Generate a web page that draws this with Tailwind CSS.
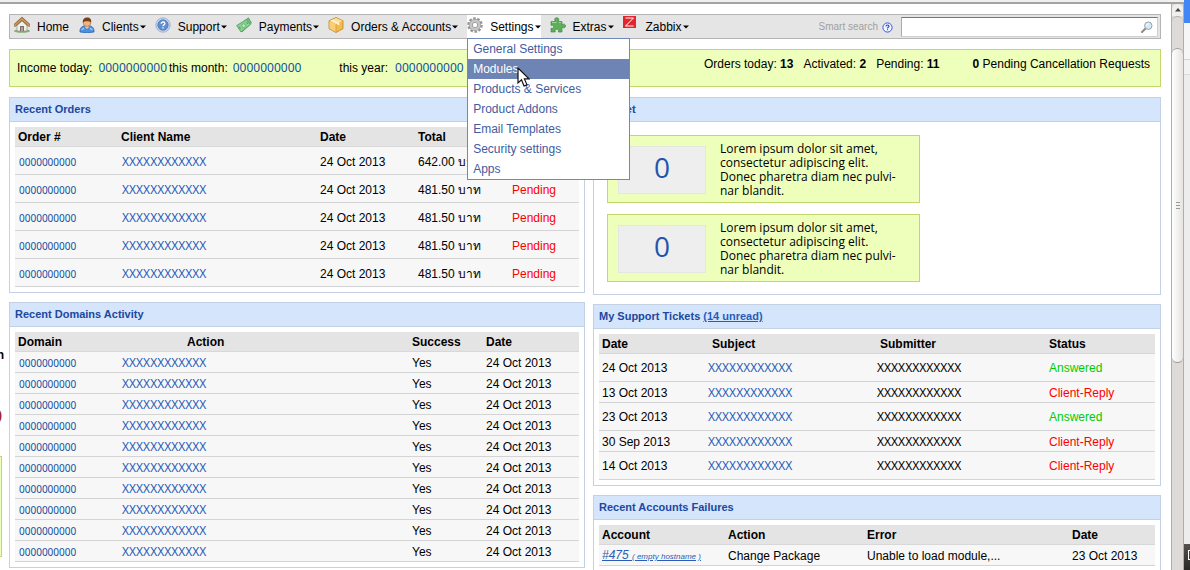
<!DOCTYPE html>
<html lang="en">
<head>
    <meta charset="UTF-8">
    <meta name="viewport" content="width=device-width, initial-scale=1.0">
    <title>Admin Dashboard</title>
    <script src="https://cdn.jsdelivr.net/npm/@tailwindcss/browser@4"></script>
</head>
<body class="bg-white text-black text-[12px] leading-4 font-['Liberation_Sans',Arial,sans-serif]">
<div class="flex h-screen overflow-hidden">

    <div class="flex flex-1 min-w-0 flex-col">
        <div class="h-1 shrink-0 bg-[#f0f0f0] border-b-2 border-[#a3a3a3]"></div>

        <div class="flex flex-1 min-h-0">
            <!-- Edge of the collapsed sidebar -->
            <aside class="w-[9px] shrink-0 overflow-hidden">
                <div class="mt-[343px] w-1 flex justify-end font-bold">n</div>
                <div class="mt-11 w-0.5 flex justify-end font-bold text-[#a02020]">)</div>
                <div class="mt-[33px] w-0.5 h-[101px] bg-[#eeffbb] border border-l-0 border-[#c3d86c]"></div>
            </aside>

            <main class="flex-1 min-w-0 pt-2.5">
                <!-- Toolbar -->
                <header class="flex items-stretch h-[25px] border border-[#b4b4b4] bg-[#e5e5e5] pl-1">
                    <nav class="flex gap-[9px] whitespace-nowrap">
                        <a href="#" class="flex items-center gap-[7px] pr-px">
                            <svg class="size-4 -mt-1" viewBox="0 0 16 16">
                                <ellipse cx="8" cy="14" rx="8" ry="1.8" fill="#7fae74"/>
                                <path d="M3 8.500 8 4l5 4.500V14H3z" fill="#f1efe9" stroke="#9a9488" stroke-width=".7"/>
                                <path d="M1 8.200 8 1.800l7 6.400" fill="none" stroke="#8a5a2b" stroke-width="3" stroke-linecap="round"/>
                                <path d="M1 8.200 8 1.800l7 6.400" fill="none" stroke="#c99a62" stroke-width="1.700" stroke-linecap="round"/>
                                <path d="M6 9h4v5H6z" fill="#77716b"/>
                                <path d="M7 10h2v4H7z" fill="#a9a39c"/>
                            </svg>
                            Home
                        </a>
                        <a href="#" class="flex items-center">
                            <svg class="size-4 mr-[7px] -mt-1" viewBox="0 0 16 16">
                                <path d="M1 15c-.4-4 2-6.500 7-6.500s7.400 2.500 7 6.500q-7 1.500-14 0z" fill="#4e8edb" stroke="#2c65b4" stroke-width=".8"/>
                                <path d="M2.500 13 5 11M13.500 13 11 11" stroke="#a9cdf5" stroke-width="1.200"/>
                                <circle cx="8" cy="5.500" r="3.900" fill="#f0b47c" stroke="#a7663a" stroke-width=".6"/>
                                <path d="M3.900 5.500C3.500 2 5.500.5 8.200.5s4.500 1.700 3.900 5C10.500 4 6 3.500 3.900 5.500z" fill="#7a3f18"/>
                                <path d="M5.500 9.500 8 12l2.500-2.500" fill="#f2c193"/>
                            </svg>
                            Clients
                            <svg class="w-1.5 h-1 ml-px" viewBox="0 0 6 4"><path d="M0 .5h6L3 3.500z"/></svg>
                        </a>
                        <a href="#" class="flex items-center">
                            <svg class="size-4 mr-[7px] -mt-1" viewBox="0 0 16 16">
                                <circle cx="8" cy="8" r="7.200" fill="#c3d4ea" stroke="#93aacb" stroke-width=".8"/>
                                <circle cx="8" cy="8" r="5.200" fill="#5f8fd0" stroke="#4674b5" stroke-width=".7"/>
                                <path d="M6.200 6.700C6.200 5.500 7 5 8 5s1.900.6 1.900 1.600C9.900 7.900 8 7.900 8 9.200" fill="none" stroke="#fff" stroke-width="1.300"/>
                                <circle cx="8" cy="11" r=".8" fill="#fff"/>
                            </svg>
                            Support
                            <svg class="w-1.5 h-1 ml-px" viewBox="0 0 6 4"><path d="M0 .5h6L3 3.500z"/></svg>
                        </a>
                        <a href="#" class="flex items-center">
                            <svg class="size-4 mr-[7px] -mt-1" viewBox="0 0 16 16">
                                <path d="M3 8 12.500.8 15.500 6 6 15z" fill="#74bd7e" stroke="#4f9e5d" stroke-width=".8"/>
                                <path d="M.6 8.500 10.500 2.500 14.500 7.500 5 15z" fill="#8bd093" stroke="#4f9e5d" stroke-width=".8"/>
                                <circle cx="7.700" cy="8.700" r="1.800" fill="#c9ecc8" stroke="#5cab69" stroke-width=".8"/>
                                <path d="M3 9.500 4.500 12M10.500 5l1.500 2" stroke="#4f9e5d"/>
                            </svg>
                            Payments
                            <svg class="w-1.5 h-1 ml-px" viewBox="0 0 6 4"><path d="M0 .5h6L3 3.500z"/></svg>
                        </a>
                        <a href="#" class="flex items-center">
                            <svg class="size-4 mr-[7px] -mt-1" viewBox="0 0 16 16">
                                <path d="M8 .5 15 3.800v7.900L8 15.500l-7-3.800V3.800z" fill="#f2bb4c" stroke="#bd8426" stroke-width=".8" stroke-linejoin="round"/>
                                <path d="M8 1 14.500 4 8 7.300 1.500 4z" fill="#fbdf9a"/>
                                <path d="M1.500 4.500 8 7.600V15l-6.500-3.500z" fill="#f8ce76"/>
                                <path d="M4.500 2.700 11.300 5.800v2.700l-2-1V6.700L2.800 3.500" fill="#fff3cf"/>
                                <path d="M8 7.500V15" stroke="#d3952f" stroke-width=".7"/>
                            </svg>
                            Orders &amp; Accounts
                            <svg class="w-1.5 h-1 ml-px" viewBox="0 0 6 4"><path d="M0 .5h6L3 3.500z"/></svg>
                        </a>
                        <div class="relative flex bg-white">
                            <a href="#" class="flex items-center">
                                <svg class="size-4 mr-[7px] -mt-1" viewBox="0 0 16 16">
                                    <circle cx="8" cy="8" r="6.600" fill="none" stroke="#969696" stroke-width="2.400" stroke-dasharray="2.600 1.547"/>
                                    <circle cx="8" cy="8" r="4.100" fill="none" stroke="#8f8f8f" stroke-width="4"/>
                                    <circle cx="8" cy="8" r="4.200" fill="none" stroke="#c6c6c6" stroke-width="2.800"/>
                                    <circle cx="8" cy="8" r="2" fill="#fff"/>
                                </svg>
                                Settings
                                <svg class="w-1.5 h-1 ml-px" viewBox="0 0 6 4"><path d="M0 .5h6L3 3.500z"/></svg>
                            </a>
                            <!-- Settings submenu -->
                            <div class="absolute left-0 top-full z-10 w-[163px] border border-[#7089bc] bg-white text-[#3f5c9e]">
                                <a href="#" class="block px-[5px] py-0.5">General Settings</a>
                                <a href="#" class="block px-[5px] py-0.5 bg-[#6d84b4] text-white">Modules</a>
                                <a href="#" class="block px-[5px] py-0.5">Products &amp; Services</a>
                                <a href="#" class="block px-[5px] py-0.5">Product Addons</a>
                                <a href="#" class="block px-[5px] py-0.5">Email Templates</a>
                                <a href="#" class="block px-[5px] py-0.5">Security settings</a>
                                <a href="#" class="block px-[5px] py-0.5">Apps</a>
                                <svg class="absolute left-[49px] top-7 w-[13px] h-5" viewBox="0 0 13 20">
                                    <path d="M1 1v15l3.500-3.200L7 19l3-1.200-2.600-5.900H12z" fill="#fff" stroke="#111" stroke-width="1.200"/>
                                </svg>
                            </div>
                        </div>
                        <a href="#" class="flex items-center">
                            <svg class="size-4 mr-[7px] -mt-1" viewBox="0 0 16 16">
                                <path d="M1 4.500h4.300C4 2 5 .7 6.700.7S9.500 2 8.300 4.500H12v3.200c2-1.200 3.500-.4 3.500 1.300s-1.500 2.500-3.500 1.300V15H8.300c.8-2-.2-2.800-1.500-2.800S4.600 13 5.300 15H1v-3.800c1.800.5 2.600-.3 2.600-1.500S2.800 7.800 1 8.400z" fill="#5fae5c" stroke="#3d8d42" stroke-width=".7"/>
                                <path d="M2 5.500h4.500M9 5.500h2" stroke="#a2d89c"/>
                            </svg>
                            Extras
                            <svg class="w-1.5 h-1 ml-px" viewBox="0 0 6 4"><path d="M0 .5h6L3 3.500z"/></svg>
                        </a>
                        <a href="#" class="flex items-center">
                            <svg class="w-[13px] h-3 mr-2.5 self-start mt-px" viewBox="0 0 13 12">
                                <path d="M0 0h13v12H0z" fill="#e3262b"/>
                                <path d="M2.500 2h8l-8 8h8" fill="none" stroke="#fff" stroke-width="1"/>
                            </svg>
                            Zabbix
                            <svg class="w-1.5 h-1 ml-px" viewBox="0 0 6 4"><path d="M0 .5h6L3 3.500z"/></svg>
                        </a>
                    </nav>
                    <form class="ml-auto flex items-center" onsubmit="return false">
                        <label for="search" class="text-[10px] text-[#a0a0a0]">Smart search</label>
                        <svg class="size-[11px] ml-1 mr-2 mt-0.5" viewBox="0 0 11 11">
                            <circle cx="5.500" cy="5.500" r="4.600" fill="#f4f6ff" stroke="#3a57d6"/>
                            <path d="M4 4.500C4 3.400 4.700 3 5.500 3s1.500.5 1.500 1.300c0 1-1.500 1-1.500 2.100" fill="none" stroke="#2340c4" stroke-width="1.100"/>
                            <path d="M5 7.300h1.100v1H5z" fill="#2340c4"/>
                        </svg>
                        <div class="flex items-center h-5 w-[257px] mr-0.5 bg-white border border-[#cfcfcf] border-t-[#777] border-l-[#aaa]">
                            <input id="search" type="text" class="flex-1 min-w-0 h-full px-1 bg-transparent outline-none">
                            <button type="submit" aria-label="Search" class="mr-1">
                                <svg class="size-3" viewBox="0 0 12 12">
                                    <path d="m1 11 3.500-3.500" stroke="#8b8b8b" stroke-width="2" stroke-linecap="round"/>
                                    <circle cx="7.300" cy="4.700" r="3.700" fill="#d3ebf8" stroke="#9a9fa5"/>
                                    <path d="M5.500 4.500q.3-1.700 2-1.900" fill="none" stroke="#fff"/>
                                </svg>
                            </button>
                        </div>
                    </form>
                </header>

                <!-- Summary bar -->
                <section class="mt-2.5 flex h-[38px] justify-between border border-[#c3d86c] bg-[#eeffbb] pl-[7px] pr-2.5 whitespace-nowrap">
                    <div class="flex items-center">
                        Income today:
                        <a href="#" class="ml-1.5 mr-0.5 font-['Noto_Sans',sans-serif] text-[#1450a0]">0000000000</a>
                        this month:
                        <a href="#" class="ml-[5px] mr-[38px] font-['Noto_Sans',sans-serif] text-[#1450a0]">0000000000</a>
                        this year:
                        <a href="#" class="ml-[7px] mr-1 font-['Noto_Sans',sans-serif] text-[#1450a0]">0000000000</a>
                        บาท
                    </div>
                    <div class="flex pt-1.5">
                        <span class="mr-2.5">Orders today: <b>13</b></span>
                        <span class="mr-2.5">Activated: <b>2</b></span>
                        <span class="mr-[33px]">Pending: <b>11</b></span>
                        <span><b>0</b> Pending Cancellation Requests</span>
                    </div>
                </section>

                <div class="mt-2.5 grid grid-cols-[576fr_568fr] gap-2 items-start">
                    <!-- Left column -->
                    <div class="flex flex-col gap-[9px] min-w-0">
                        <section class="border border-[#c3d1e3]">
                            <h2 class="h-6 px-[5px] pt-[3px] text-[11px] font-bold text-[#2048a0] bg-[#d4e5fc] border-b border-[#c3d1e3]">Recent Orders</h2>
                            <div class="p-[5px]">
                                <table class="w-full table-fixed border-separate border-spacing-0 text-left bg-[#f7f7f7] [&_th]:h-5 [&_th]:bg-[#e4e4e4] [&_th]:px-[3px] [&_th]:border-b [&_th]:border-[#d8d8d8] [&_td]:h-7 [&_td]:px-[3px] [&_td]:pt-0.5 [&_td]:border-b [&_td]:border-[#d4d4d4]">
                                    <thead>
                                        <tr>
                                            <th class="w-[103px]">Order #</th>
                                            <th class="w-[199px]">Client Name</th>
                                            <th class="w-[98px]">Date</th>
                                            <th class="w-[94px]">Total</th>
                                            <th></th>
                                        </tr>
                                    </thead>
                                    <tbody>
                                        <tr>
                                            <td><a href="#" class="ml-px font-['Noto_Sans',sans-serif] text-[10px] text-[#1450a0]">0000000000</a></td>
                                            <td><a href="#" class="ml-px font-['Noto_Sans',sans-serif] text-[#2a5db8]">XXXXXXXXXXXX</a></td>
                                            <td>24 Oct 2013</td>
                                            <td>642.00 บาท</td>
                                            <td class="text-[#ff0000]">Pending</td>
                                        </tr>
                                        <tr>
                                            <td><a href="#" class="ml-px font-['Noto_Sans',sans-serif] text-[10px] text-[#1450a0]">0000000000</a></td>
                                            <td><a href="#" class="ml-px font-['Noto_Sans',sans-serif] text-[#2a5db8]">XXXXXXXXXXXX</a></td>
                                            <td>24 Oct 2013</td>
                                            <td>481.50 บาท</td>
                                            <td class="text-[#ff0000]">Pending</td>
                                        </tr>
                                        <tr>
                                            <td><a href="#" class="ml-px font-['Noto_Sans',sans-serif] text-[10px] text-[#1450a0]">0000000000</a></td>
                                            <td><a href="#" class="ml-px font-['Noto_Sans',sans-serif] text-[#2a5db8]">XXXXXXXXXXXX</a></td>
                                            <td>24 Oct 2013</td>
                                            <td>481.50 บาท</td>
                                            <td class="text-[#ff0000]">Pending</td>
                                        </tr>
                                        <tr>
                                            <td><a href="#" class="ml-px font-['Noto_Sans',sans-serif] text-[10px] text-[#1450a0]">0000000000</a></td>
                                            <td><a href="#" class="ml-px font-['Noto_Sans',sans-serif] text-[#2a5db8]">XXXXXXXXXXXX</a></td>
                                            <td>24 Oct 2013</td>
                                            <td>481.50 บาท</td>
                                            <td class="text-[#ff0000]">Pending</td>
                                        </tr>
                                        <tr>
                                            <td><a href="#" class="ml-px font-['Noto_Sans',sans-serif] text-[10px] text-[#1450a0]">0000000000</a></td>
                                            <td><a href="#" class="ml-px font-['Noto_Sans',sans-serif] text-[#2a5db8]">XXXXXXXXXXXX</a></td>
                                            <td>24 Oct 2013</td>
                                            <td>481.50 บาท</td>
                                            <td class="text-[#ff0000]">Pending</td>
                                        </tr>
                                    </tbody>
                                </table>
                            </div>
                        </section>

                        <section class="border border-[#c3d1e3]">
                            <h2 class="h-6 px-[5px] pt-[3px] text-[11px] font-bold text-[#2048a0] bg-[#d4e5fc] border-b border-[#c3d1e3]">Recent Domains Activity</h2>
                            <div class="p-[5px]">
                                <table class="w-full table-fixed border-separate border-spacing-0 text-left bg-[#f7f7f7] [&_th]:h-5 [&_th]:bg-[#e4e4e4] [&_th]:px-[3px] [&_th]:border-b [&_th]:border-[#d8d8d8] [&_td]:h-[21px] [&_td]:px-[3px] [&_td]:pt-0.5 [&_td]:border-b [&_td]:border-[#d4d4d4]">
                                    <thead>
                                        <tr>
                                            <th class="w-[103px]">Domain</th>
                                            <th class="w-[291px]"><span class="ml-[66px]">Action</span></th>
                                            <th class="w-[74px]">Success</th>
                                            <th>Date</th>
                                        </tr>
                                    </thead>
                                    <tbody>
                                        <tr>
                                            <td><a href="#" class="ml-px font-['Noto_Sans',sans-serif] text-[10px] text-[#1450a0]">0000000000</a></td>
                                            <td><a href="#" class="ml-px font-['Noto_Sans',sans-serif] text-[#2a5db8]">XXXXXXXXXXXX</a></td>
                                            <td>Yes</td>
                                            <td>24 Oct 2013</td>
                                        </tr>
                                        <tr>
                                            <td><a href="#" class="ml-px font-['Noto_Sans',sans-serif] text-[10px] text-[#1450a0]">0000000000</a></td>
                                            <td><a href="#" class="ml-px font-['Noto_Sans',sans-serif] text-[#2a5db8]">XXXXXXXXXXXX</a></td>
                                            <td>Yes</td>
                                            <td>24 Oct 2013</td>
                                        </tr>
                                        <tr>
                                            <td><a href="#" class="ml-px font-['Noto_Sans',sans-serif] text-[10px] text-[#1450a0]">0000000000</a></td>
                                            <td><a href="#" class="ml-px font-['Noto_Sans',sans-serif] text-[#2a5db8]">XXXXXXXXXXXX</a></td>
                                            <td>Yes</td>
                                            <td>24 Oct 2013</td>
                                        </tr>
                                        <tr>
                                            <td><a href="#" class="ml-px font-['Noto_Sans',sans-serif] text-[10px] text-[#1450a0]">0000000000</a></td>
                                            <td><a href="#" class="ml-px font-['Noto_Sans',sans-serif] text-[#2a5db8]">XXXXXXXXXXXX</a></td>
                                            <td>Yes</td>
                                            <td>24 Oct 2013</td>
                                        </tr>
                                        <tr>
                                            <td><a href="#" class="ml-px font-['Noto_Sans',sans-serif] text-[10px] text-[#1450a0]">0000000000</a></td>
                                            <td><a href="#" class="ml-px font-['Noto_Sans',sans-serif] text-[#2a5db8]">XXXXXXXXXXXX</a></td>
                                            <td>Yes</td>
                                            <td>24 Oct 2013</td>
                                        </tr>
                                        <tr>
                                            <td><a href="#" class="ml-px font-['Noto_Sans',sans-serif] text-[10px] text-[#1450a0]">0000000000</a></td>
                                            <td><a href="#" class="ml-px font-['Noto_Sans',sans-serif] text-[#2a5db8]">XXXXXXXXXXXX</a></td>
                                            <td>Yes</td>
                                            <td>24 Oct 2013</td>
                                        </tr>
                                        <tr>
                                            <td><a href="#" class="ml-px font-['Noto_Sans',sans-serif] text-[10px] text-[#1450a0]">0000000000</a></td>
                                            <td><a href="#" class="ml-px font-['Noto_Sans',sans-serif] text-[#2a5db8]">XXXXXXXXXXXX</a></td>
                                            <td>Yes</td>
                                            <td>24 Oct 2013</td>
                                        </tr>
                                        <tr>
                                            <td><a href="#" class="ml-px font-['Noto_Sans',sans-serif] text-[10px] text-[#1450a0]">0000000000</a></td>
                                            <td><a href="#" class="ml-px font-['Noto_Sans',sans-serif] text-[#2a5db8]">XXXXXXXXXXXX</a></td>
                                            <td>Yes</td>
                                            <td>24 Oct 2013</td>
                                        </tr>
                                        <tr>
                                            <td><a href="#" class="ml-px font-['Noto_Sans',sans-serif] text-[10px] text-[#1450a0]">0000000000</a></td>
                                            <td><a href="#" class="ml-px font-['Noto_Sans',sans-serif] text-[#2a5db8]">XXXXXXXXXXXX</a></td>
                                            <td>Yes</td>
                                            <td>24 Oct 2013</td>
                                        </tr>
                                        <tr>
                                            <td><a href="#" class="ml-px font-['Noto_Sans',sans-serif] text-[10px] text-[#1450a0]">0000000000</a></td>
                                            <td><a href="#" class="ml-px font-['Noto_Sans',sans-serif] text-[#2a5db8]">XXXXXXXXXXXX</a></td>
                                            <td>Yes</td>
                                            <td>24 Oct 2013</td>
                                        </tr>
                                    </tbody>
                                </table>
                            </div>
                        </section>
                    </div>

                    <!-- Right column -->
                    <div class="flex flex-col gap-[9px] min-w-0">
                        <section class="border border-[#c3d1e3]">
                            <h2 class="h-6 px-[5px] pt-[3px] text-[11px] font-bold text-[#2048a0] bg-[#d4e5fc] border-b border-[#c3d1e3]">Widget</h2>
                            <div class="flex flex-col items-start gap-[11px] px-[13px] pt-[13px] pb-3 font-['Open_Sans',sans-serif]">
                                <div class="flex items-center w-[313px] pl-2.5 pt-2.5 pb-2 border border-[#c3d86c] bg-[#eeffbb]">
                                    <a href="#" class="flex items-center justify-center w-[88px] h-12 pb-1.5 shrink-0 bg-[#eeeeee] border border-[#e4e6e0] text-[28px] text-[#1f55b0]">0</a>
                                    <p class="ml-3.5 -my-1 leading-3.5 whitespace-nowrap">Lorem ipsum dolor sit amet,<br>consectetur adipiscing elit.<br>Donec pharetra diam nec pulvi-<br>nar blandit.</p>
                                </div>
                                <div class="flex items-center w-[313px] pl-2.5 pt-2.5 pb-2 border border-[#c3d86c] bg-[#eeffbb]">
                                    <a href="#" class="flex items-center justify-center w-[88px] h-12 pb-1.5 shrink-0 bg-[#eeeeee] border border-[#e4e6e0] text-[28px] text-[#1f55b0]">0</a>
                                    <p class="ml-3.5 -my-1 leading-3.5 whitespace-nowrap">Lorem ipsum dolor sit amet,<br>consectetur adipiscing elit.<br>Donec pharetra diam nec pulvi-<br>nar blandit.</p>
                                </div>
                            </div>
                        </section>

                        <section class="border border-[#c3d1e3]">
                            <h2 class="h-6 px-[5px] pt-[3px] text-[11px] font-bold text-[#2048a0] bg-[#d4e5fc] border-b border-[#c3d1e3]">My Support Tickets <a href="#" class="underline text-[#2a5db8]">(14 unread)</a></h2>
                            <div class="p-[5px]">
                                <table class="w-full table-fixed border-separate border-spacing-0 text-left bg-[#f7f7f7] [&_th]:h-5 [&_th]:bg-[#e4e4e4] [&_th]:px-[3px] [&_th]:border-b [&_th]:border-[#d8d8d8] [&_td]:px-[3px] [&_td]:pt-px [&_td]:border-b [&_td]:border-[#d4d4d4]">
                                    <thead>
                                        <tr>
                                            <th class="w-[106px]">Date</th>
                                            <th class="w-[168px]"><span class="ml-1">Subject</span></th>
                                            <th class="w-[173px]"><span class="ml-1">Submitter</span></th>
                                            <th>Status</th>
                                        </tr>
                                    </thead>
                                    <tbody>
                                        <tr class="h-7">
                                            <td>24 Oct 2013</td>
                                            <td><a href="#" class="font-['Noto_Sans',sans-serif] text-[#2a5db8]">XXXXXXXXXXXX</a></td>
                                            <td><span class="ml-px font-['Noto_Sans',sans-serif]">XXXXXXXXXXXX</span></td>
                                            <td class="text-[#00cc00]">Answered</td>
                                        </tr>
                                        <tr class="h-[21px]">
                                            <td>13 Oct 2013</td>
                                            <td><a href="#" class="font-['Noto_Sans',sans-serif] text-[#2a5db8]">XXXXXXXXXXXX</a></td>
                                            <td><span class="ml-px font-['Noto_Sans',sans-serif]">XXXXXXXXXXXX</span></td>
                                            <td class="text-[#ff0000]">Client-Reply</td>
                                        </tr>
                                        <tr class="h-7">
                                            <td>23 Oct 2013</td>
                                            <td><a href="#" class="font-['Noto_Sans',sans-serif] text-[#2a5db8]">XXXXXXXXXXXX</a></td>
                                            <td><span class="ml-px font-['Noto_Sans',sans-serif]">XXXXXXXXXXXX</span></td>
                                            <td class="text-[#00cc00]">Answered</td>
                                        </tr>
                                        <tr class="h-[21px]">
                                            <td>30 Sep 2013</td>
                                            <td><a href="#" class="font-['Noto_Sans',sans-serif] text-[#2a5db8]">XXXXXXXXXXXX</a></td>
                                            <td><span class="ml-px font-['Noto_Sans',sans-serif]">XXXXXXXXXXXX</span></td>
                                            <td class="text-[#ff0000]">Client-Reply</td>
                                        </tr>
                                        <tr class="h-7">
                                            <td>14 Oct 2013</td>
                                            <td><a href="#" class="font-['Noto_Sans',sans-serif] text-[#2a5db8]">XXXXXXXXXXXX</a></td>
                                            <td><span class="ml-px font-['Noto_Sans',sans-serif]">XXXXXXXXXXXX</span></td>
                                            <td class="text-[#ff0000]">Client-Reply</td>
                                        </tr>
                                    </tbody>
                                </table>
                            </div>
                        </section>

                        <section class="border border-[#c3d1e3]">
                            <h2 class="h-6 px-[5px] pt-[3px] text-[11px] font-bold text-[#2048a0] bg-[#d4e5fc] border-b border-[#c3d1e3]">Recent Accounts Failures</h2>
                            <div class="p-[5px]">
                                <table class="w-full table-fixed border-separate border-spacing-0 text-left whitespace-nowrap bg-[#f7f7f7] [&_th]:h-5 [&_th]:bg-[#e4e4e4] [&_th]:px-[3px] [&_th]:border-b [&_th]:border-[#d8d8d8] [&_td]:h-[21px] [&_td]:px-[3px] [&_td]:pt-0.5 [&_td]:border-b [&_td]:border-[#d4d4d4]">
                                    <thead>
                                        <tr>
                                            <th class="w-[126px]">Account</th>
                                            <th class="w-[139px]">Action</th>
                                            <th class="w-[205px]">Error</th>
                                            <th>Date</th>
                                        </tr>
                                    </thead>
                                    <tbody>
                                        <tr>
                                            <td><a href="#" class="italic underline text-[#2a5db8]">#475 <span class="text-[8px]">( empty hostname )</span></a></td>
                                            <td>Change Package</td>
                                            <td>Unable to load module,...</td>
                                            <td>23 Oct 2013</td>
                                        </tr>
                                    </tbody>
                                </table>
                            </div>
                        </section>
                    </div>
                </div>
            </main>

            <!-- Scrollbar -->
            <div class="ml-2.5 w-[13px] shrink-0 flex flex-col bg-[#dedad7] border-x border-[#b0aeac]">
                <div class="h-3 shrink-0 flex items-center justify-center rounded-t-md bg-[#f0efee]">
                    <svg class="w-1.5 h-1" viewBox="0 0 6 4"><path d="M3 0 6 3.500H0z" fill="#444"/></svg>
                </div>
                <div class="h-8 shrink-0 rounded-t-md border-t border-[#b0aeac]"></div>
                <div class="h-[315px] shrink-0 flex flex-col items-center justify-center gap-0.5 rounded-md border-y border-[#9c9a98] bg-linear-to-r from-white to-[#e6e4e2]">
                    <i class="w-1 h-px bg-[#999]"></i>
                    <i class="w-1 h-px bg-[#999]"></i>
                    <i class="w-1 h-px bg-[#999]"></i>
                </div>
            </div>
        </div>
    </div>

    <!-- Window behind -->
    <div class="w-1.5 shrink-0 flex flex-col bg-[#ededed]">
        <div class="h-[23px] bg-[#4285f4]"></div>
        <div class="h-[37px] bg-[#f6f6f6] border-b border-[#d5d5d5]"></div>
        <div class="h-[15px] bg-[#f2f2f2] border-b border-[#dcdcdc]"></div>
        <div class="mt-auto h-[26px] flex items-start justify-end pt-1.5 bg-linear-to-b from-[#55524c] to-[#2b2926]">
            <div class="w-0.5 h-2.5 border border-r-0 border-white"></div>
        </div>
    </div>
</div>
</body>
</html>
